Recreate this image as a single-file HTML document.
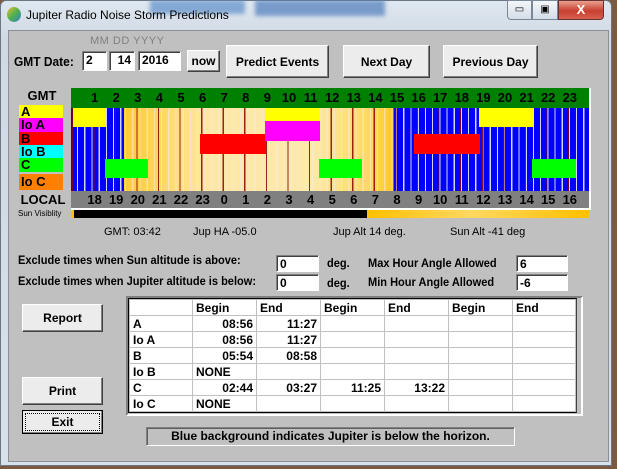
<!DOCTYPE html>
<html><head><meta charset="utf-8"><style>
*{margin:0;padding:0;box-sizing:border-box}
body{width:617px;height:469px;overflow:hidden;position:relative;background:#7a5a40;font-family:"Liberation Sans",sans-serif}
.a{position:absolute}
.frame{left:0;top:0;width:612px;height:466px;background:linear-gradient(#dfe7f0,#cfd9e4 40px,#d8e0ea);border:1px solid #6b7785;border-radius:6px 6px 0 0}
.client{left:8px;top:30px;width:601px;height:432px;background:#c0c0c0;border:1px solid #8a8f96}
.b{font-weight:bold;font-size:12px;color:#000;transform:scaleX(.92);transform-origin:left center;white-space:nowrap}
.inp{background:#fff;border:1px solid;border-color:#808080 #fff #fff #808080;box-shadow:inset 1px 1px 0 #404040;font-size:12px;font-weight:bold;padding:1px 3px;line-height:14px}
.btn{background:#ececec;border:1px solid;border-color:#fff #404040 #404040 #fff;box-shadow:inset -1px -1px 0 #808080;display:flex;align-items:center;justify-content:center;font-weight:bold;font-size:12px}
.lbl{left:19px;width:44px;font-weight:bold;font-size:13px;padding-left:2px;line-height:14px}
.n{font-weight:bold;font-size:13px;width:24px;text-align:center;line-height:20px;letter-spacing:0}
.sm{font-size:11px;color:#000}
table{border-collapse:collapse;font-size:12px;font-weight:bold;background:#fff}
td{border:1px solid #c0c0c0;height:16px;padding:0 3px;line-height:14px;white-space:nowrap}
</style></head><body>
<div class="a frame"></div>
<div class="a" style="left:150px;top:0;width:95px;height:14px;background:#5d8fc8;opacity:.7;filter:blur(2px)"></div>
<div class="a" style="left:255px;top:0;width:130px;height:16px;background:#4f7dbb;opacity:.7;filter:blur(2px)"></div>
<div class="a" style="left:7px;top:7px;width:14px;height:15px;border-radius:50%;background:linear-gradient(135deg,#e8c030,#50b050 50%,#3080c0)"></div>
<div class="a" style="left:26px;top:8px;font-size:12px;color:#000">Jupiter Radio Noise Storm Predictions</div>
<div class="a" style="left:507px;top:0;width:25px;height:20px;border:1px solid #7a8796;border-radius:0 0 0 4px;background:linear-gradient(#f4f7fa,#d4dde8);font-size:10px;text-align:center;line-height:17px">▭</div>
<div class="a" style="left:532px;top:0;width:26px;height:20px;border:1px solid #7a8796;background:linear-gradient(#f4f7fa,#d4dde8);font-size:10px;text-align:center;line-height:17px">▣</div>
<div class="a" style="left:558px;top:0;width:46px;height:20px;border:1px solid #6b3030;border-radius:0 0 4px 0;background:linear-gradient(#e8a090,#c84030 55%,#d86050);color:#fff;font-weight:bold;font-size:13px;text-align:center;line-height:17px">X</div>
<div class="a client"></div>

<div class="a" style="left:90px;top:35px;font-size:11px;color:#808080;letter-spacing:.5px">MM DD YYYY</div>
<div class="a b" style="left:14px;top:54px;font-size:13px">GMT Date:</div>
<div class="a inp" style="left:82px;top:51px;width:25px;height:20px">2</div>
<div class="a inp" style="left:109px;top:51px;width:26px;height:20px;text-align:right">14</div>
<div class="a inp" style="left:138px;top:51px;width:43px;height:20px">2016</div>
<div class="a btn" style="left:187px;top:50px;width:33px;height:22px">now</div>
<div class="a btn" style="left:226px;top:45px;width:103px;height:33px">Predict Events</div>
<div class="a btn" style="left:343px;top:45px;width:87px;height:33px">Next Day</div>
<div class="a btn" style="left:443px;top:45px;width:95px;height:33px">Previous Day</div>

<div class="a lbl" style="top:89px;text-align:center">GMT</div>
<div class="a lbl" style="top:105px;height:13px;background:#ffff00">A</div>
<div class="a lbl" style="top:118px;height:14px;background:#ff00ff">Io A</div>
<div class="a lbl" style="top:132px;height:13px;background:#ff0000">B</div>
<div class="a lbl" style="top:145px;height:13px;background:#00ffff">Io B</div>
<div class="a lbl" style="top:158px;height:14px;background:#00ff00">C</div>
<div class="a lbl" style="top:174px;height:16px;background:#ff8000;line-height:16px">Io C</div>
<div class="a lbl" style="top:193px;text-align:center;left:17px;width:50px">LOCAL</div>
<div class="a" style="left:18px;top:209px;font-size:8px">Sun Visiblity</div>

<div class="a" style="left:71px;top:88px;width:518px;height:20px;background:#008000"></div>
<div class="a" style="left:71px;top:108px;width:518px;height:83px;background:linear-gradient(90deg,#0000ff 0,#0000ff 53px,#ffcc33 53px,#ffd24d 75px,#fde7a6 135px,#fde9aa 240px,#ffd860 300px,#ffc822 322px,#0000ff 323px,#0000ff 518px)"></div>
<div class="a" style="left:71px;top:108px;width:53px;height:83px;background:repeating-linear-gradient(90deg,transparent 0,transparent 6px,rgba(235,235,245,.9) 6px,rgba(235,235,245,.9) 7.2px)"></div>
<div class="a" style="left:124px;top:108px;width:270px;height:83px;background:repeating-linear-gradient(90deg,transparent 0,transparent 1px,rgba(240,235,235,.55) 1px,rgba(240,235,235,.55) 2.2px,transparent 2.2px,transparent 7.2px)"></div>
<div class="a" style="left:394px;top:108px;width:195px;height:83px;background:repeating-linear-gradient(90deg,transparent 0,transparent 2px,rgba(235,235,245,.9) 2px,rgba(235,235,245,.9) 3.2px,transparent 3.2px,transparent 7.2px)"></div>
<div class="a" style="left:71px;top:108px;width:518px;height:83px;background:repeating-linear-gradient(90deg,transparent 0,transparent 0.6px,#8b0000 0.6px,#8b0000 1.8px,transparent 1.8px,transparent 21.58px);opacity:.85"></div>
<div class="a" style="left:73px;top:108px;width:33px;height:19px;background:#ffff00"></div>
<div class="a" style="left:105px;top:159px;width:43px;height:19px;background:#00ff00"></div>
<div class="a" style="left:200px;top:134px;width:66px;height:20px;background:#ff0000"></div>
<div class="a" style="left:265px;top:108px;width:55px;height:13px;background:#ffff00"></div>
<div class="a" style="left:265px;top:121px;width:55px;height:20px;background:#ff00ff"></div>
<div class="a" style="left:319px;top:159px;width:43px;height:19px;background:#00ff00"></div>
<div class="a" style="left:414px;top:134px;width:66px;height:20px;background:#ff0000"></div>
<div class="a" style="left:479px;top:108px;width:55px;height:19px;background:#ffff00"></div>
<div class="a" style="left:532px;top:159px;width:44px;height:19px;background:#00ff00"></div>
<div class="a" style="left:71px;top:191px;width:518px;height:17px;background:#808080"></div>
<div class="a" style="left:71px;top:208px;width:520px;height:2px;background:#fff"></div>
<div class="a" style="left:589px;top:88px;width:2px;height:122px;background:#fff"></div>
<div class="a" style="left:71px;top:210px;width:518px;height:8px;background:linear-gradient(90deg,#ffc000 0,#ffc000 3px,#000 3px,#000 296px,#ffc000 296px,#ffd860 400px,#ffc000 518px)"></div>

<div id="g"></div>

<div class="a sm" style="left:104px;top:226px">GMT: 03:42</div>
<div class="a sm" style="left:193px;top:226px">Jup HA -05.0</div>
<div class="a sm" style="left:333px;top:226px">Jup Alt 14 deg.</div>
<div class="a sm" style="left:450px;top:226px">Sun Alt -41 deg</div>

<div class="a b" style="left:18px;top:253px">Exclude times when Sun altitude is above:</div>
<div class="a b" style="left:18px;top:274px">Exclude times when Jupiter altitude is below:</div>
<div class="a inp" style="left:276px;top:255px;width:43px;height:17px">0</div>
<div class="a inp" style="left:276px;top:274px;width:43px;height:17px">0</div>
<div class="a b" style="left:327px;top:256px">deg.</div>
<div class="a b" style="left:327px;top:276px">deg.</div>
<div class="a b" style="left:368px;top:256px">Max Hour Angle Allowed</div>
<div class="a b" style="left:368px;top:275px">Min Hour Angle Allowed</div>
<div class="a inp" style="left:516px;top:255px;width:52px;height:17px">6</div>
<div class="a inp" style="left:516px;top:274px;width:52px;height:17px">-6</div>

<div class="a btn" style="left:22px;top:304px;width:81px;height:28px">Report</div>
<div class="a btn" style="left:22px;top:377px;width:81px;height:28px">Print</div>
<div class="a btn" style="left:22px;top:410px;width:81px;height:24px;border-color:#000;"><span style="border:1px dotted #000;padding:1px 25px">Exit</span></div>

<div class="a" style="left:126px;top:296px;width:457px;height:120px;border:2px solid;border-color:#808080 #fff #fff #808080"></div>
<div class="a" style="left:128px;top:298px;border:1px solid #000;border-right-color:#404040;background:#fff">
<table>
<tr><td style="width:63px"></td><td style="width:64px">Begin</td><td style="width:64px">End</td><td style="width:64px">Begin</td><td style="width:64px">End</td><td style="width:64px">Begin</td><td style="width:63px">End</td></tr>
<tr><td>A</td><td align="right">08:56</td><td align="right">11:27</td><td></td><td></td><td></td><td></td></tr>
<tr><td>Io A</td><td align="right">08:56</td><td align="right">11:27</td><td></td><td></td><td></td><td></td></tr>
<tr><td>B</td><td align="right">05:54</td><td align="right">08:58</td><td></td><td></td><td></td><td></td></tr>
<tr><td>Io B</td><td>NONE</td><td></td><td></td><td></td><td></td><td></td></tr>
<tr><td>C</td><td align="right">02:44</td><td align="right">03:27</td><td align="right">11:25</td><td align="right">13:22</td><td></td><td></td></tr>
<tr><td>Io C</td><td>NONE</td><td></td><td></td><td></td><td></td><td></td></tr>
</table></div>

<div class="a" style="left:146px;top:427px;width:369px;height:19px;border:1px solid;border-color:#808080 #fff #fff #808080;box-shadow:inset 1px 1px 0 #606060;font-weight:bold;font-size:12px;text-align:center;line-height:17px">Blue background indicates Jupiter is below the horizon.</div>

<script>
var g=document.getElementById('g'),h='';
for(var i=1;i<=23;i++){var x=73+21.6*i-12;
h+='<div class="a n" style="left:'+x+'px;top:88px">'+i+'</div>';
h+='<div class="a n" style="left:'+x+'px;top:190px">'+((i+17)%24)+'</div>';}
g.innerHTML=h;
</script>
</body></html>
